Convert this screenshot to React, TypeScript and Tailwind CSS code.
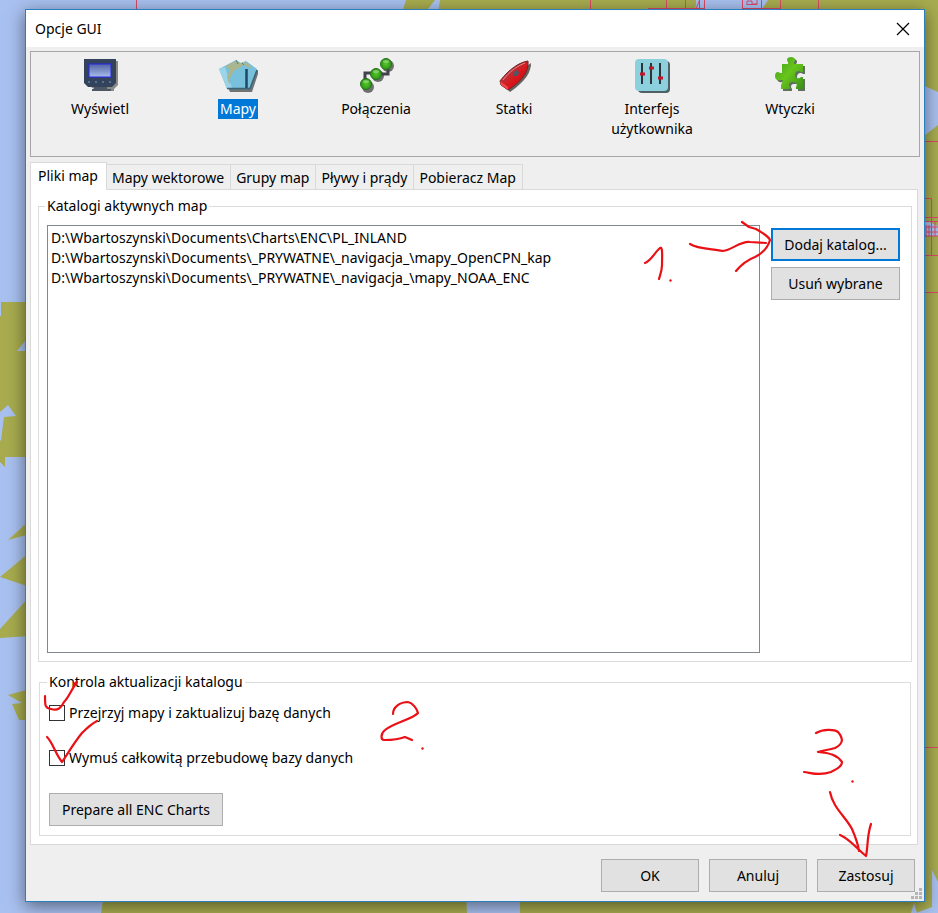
import { useState } from "react";
import type { ReactNode } from "react";

const TABS = ["Pliki map", "Mapy wektorowe", "Grupy map", "Pływy i prądy", "Pobieracz Map"];

const CHART_DIRS = [
    "D:\\Wbartoszynski\\Documents\\Charts\\ENC\\PL_INLAND",
    "D:\\Wbartoszynski\\Documents\\_PRYWATNE\\_navigacja_\\mapy_OpenCPN_kap",
    "D:\\Wbartoszynski\\Documents\\_PRYWATNE\\_navigacja_\\mapy_NOAA_ENC",
];

function DisplayIcon() {
    return (
        <svg width="40" height="40" viewBox="0 0 40 40">
            <defs>
                <linearGradient id="screen" x1="0" y1="0" x2="0" y2="1">
                    <stop offset="0" stopColor="#5262a4" />
                    <stop offset="1" stopColor="#a9bdea" />
                </linearGradient>
            </defs>
            <path d="M6 6H38V30L34 34V36H14V34L8 30Z" fill="#8d8984" />
            <path d="M4 4H36V28L32 32H8L4 28Z" fill="#33435c" />
            <path d="M14 32H27V34H31V36H12V34H14Z" fill="#4d5663" />
            <rect x="9" y="9" width="22" height="13" fill="url(#screen)" stroke="#2626f0" />
            <path d="M9 26V28M16 26V28M23 26V28M30 26V28" stroke="#79a3bd" />
        </svg>
    );
}

function MapsIcon() {
    return (
        <svg width="40" height="40" viewBox="0 0 40 40">
            <path d="M3 17L22 8L41 16L34 37H12Z" fill="#6f7476" />
            <path d="M1 14L18 5L23 8L28 6L39 14L32 34H9Z" fill="#79c0dc" />
            <path d="M1 14L7 12L14 33H9Z" fill="#9ad4e8" />
            <path d="M15 7L19 6L22 8L27 7L32 10L33 13L30 12L27 10L24 11L21 13L17 15L14 19L12 23L12 29L10 27L9 21L12 15L9 13L8 11Z" fill="#a9b68f" />
            <path d="M18 5L20 9M24 8L26 10" stroke="#4c7f90" />
            <path d="M9 33.500H32L39 15" fill="none" stroke="#3a6475" strokeWidth="1.500" />
            <path d="M28.500 14V33" stroke="#1c4a62" strokeWidth="2.500" />
        </svg>
    );
}

function ConnectionsIcon() {
    return (
        <svg width="40" height="40" viewBox="0 0 40 40">
            <defs>
                <radialGradient id="node">
                    <stop offset="0" stopColor="#52c828" />
                    <stop offset="1" stopColor="#2c9416" />
                </radialGradient>
            </defs>
            <g fill="#707070">
                <circle cx="12" cy="32" r="6" />
                <circle cx="22" cy="21" r="6" />
                <circle cx="32" cy="11" r="6" />
            </g>
            <path d="M9 26V18H20M20 19H32V11" fill="none" stroke="#41424c" strokeWidth="3" />
            <g fill="url(#node)" stroke="#286f20">
                <circle cx="10" cy="29" r="5.500" />
                <circle cx="20" cy="19" r="5.500" />
                <circle cx="30" cy="9" r="5.500" />
            </g>
            <g fill="#a8e58d" opacity="0.6">
                <ellipse cx="10" cy="26.500" rx="3" ry="1.500" />
                <ellipse cx="20" cy="16.500" rx="3" ry="1.500" />
                <ellipse cx="30" cy="6.500" rx="3" ry="1.500" />
            </g>
        </svg>
    );
}

function ShipsIcon() {
    return (
        <svg width="40" height="40" viewBox="0 0 40 40">
            <defs>
                <linearGradient id="hull" x1="0" y1="0" x2="1" y2="1">
                    <stop offset="0.200" stopColor="#a8454a" />
                    <stop offset="0.600" stopColor="#dd1218" />
                    <stop offset="1" stopColor="#8c2228" />
                </linearGradient>
            </defs>
            <path d="M37 8C37 17 32 26 16 37L8 29Z" fill="#66605e" />
            <path d="M34 6C26 7 15 14 6 26L7 30L14 35C28 26 35 17 34 6Z" fill="url(#hull)" stroke="#70252a" />
            <path d="M6 26L14 32L14 35L7 30Z" fill="#f04848" />
            <path d="M31 8C23 11 15 17 9 25" fill="none" stroke="#d98b8e" />
            <path d="M19 18L22 15L25 17L24 21L20 21Z" fill="#525662" />
        </svg>
    );
}

function InterfaceIcon() {
    return (
        <svg width="40" height="40" viewBox="0 0 40 40">
            <rect x="6" y="6" width="32" height="32" rx="4" fill="#4f6064" />
            <rect x="3" y="4" width="33" height="32" rx="4" fill="#8ccfdd" />
            <path d="M10 8V29M19 8V29M28 8V29" stroke="#2c3438" strokeWidth="2" />
            <path d="M8 19H13M17 13H22M26 23H31" stroke="#c0152b" strokeWidth="3" />
        </svg>
    );
}

function PuzzleShape({ fill }: { fill: string }) {
    return (
        <path
            d="M12 9H18V7C16 5 17 2 21 2C25 2 26 5 24 7V9H33V17H31C29 15 25 16 25 20C25 24 29 24 31 22H33V34H26V32C28 29 26 27 23 27C19 27 18 29 20 32V34H11V30L13 25H10C8 26 5 25 5 21C5 17 8 16 10 18H12Z"
            fill={fill}
        />
    );
}

function PluginsIcon() {
    return (
        <svg width="40" height="40" viewBox="0 0 40 40">
            <defs>
                <linearGradient id="puzzle" x1="0" y1="0" x2="1" y2="1">
                    <stop offset="0" stopColor="#3d9c1d" />
                    <stop offset="0.500" stopColor="#68c51b" />
                    <stop offset="1" stopColor="#389017" />
                </linearGradient>
            </defs>
            <g transform="translate(2 2)">
                <PuzzleShape fill="#60705a" />
            </g>
            <PuzzleShape fill="url(#puzzle)" />
        </svg>
    );
}

const SECTIONS = [
    { name: "Wyświetl", icon: <DisplayIcon /> },
    { name: "Mapy", icon: <MapsIcon /> },
    { name: "Połączenia", icon: <ConnectionsIcon /> },
    { name: "Statki", icon: <ShipsIcon /> },
    { name: "Interfejs użytkownika", icon: <InterfaceIcon /> },
    { name: "Wtyczki", icon: <PluginsIcon /> },
];

/* Sea chart visible behind the dialog */
function ChartBackground() {
    return (
        <svg className="absolute inset-0 w-full h-full" viewBox="0 0 938 913" preserveAspectRatio="none" aria-hidden="true">
            <rect width="938" height="913" fill="#a9c1f0" />
            <g fill="#a8ac4f">
                <path d="M406 0H435L428 9V20H400Z" />
                <path d="M440 0H938V913H101L104 895H420V20H437Z" />
                <path d="M0 302H30V457H5V467L0 462Z" />
                <path d="M30 520L8 540L30 534Z" />
                <path d="M30 552L0 577L30 587Z" />
                <path d="M30 596L0 629V638L30 636Z" />
                <path d="M30 689L8 695L22 703L12 704L19 720H30Z" />
            </g>
            <g fill="#a9c1f0">
                <path d="M466 895H520V913H467Z" />
                <path d="M0 302H1V316H0Z" />
                <path d="M30 335L17 351H30Z" />
                <path d="M0 412L8 405L16 416L4 417L1 441L0 440Z" />
                <path d="M696 0H768L762 9H696Z" />
                <path d="M698 0L695 9H705V0Z" />
                <path d="M920 84L938 92V125L920 139Z" />
                <path d="M920 218L938 226V236H920Z" />
                <path d="M938 882L932 870V907L916 913H938Z" />
                <path d="M911 913L914 903L917 913Z" />
            </g>
            <g fill="none" stroke="#dc4865">
                <path d="M136.500 0V9M590.500 0V9M666.500 0V9M685.500 0V9M699.500 0L696 9M699.500 0V9M704.500 0V9M742.500 0V9M761.500 0V9M780.500 0V9M818.500 0V9M648 8.500H705M742 8.500H781" />
                <path d="M747 5V1H752V4H757M747 4.500H757V0" />
                <path d="M925 141.500H938M925 198.500H931.500V255M925 217.500H938M925 221.500H938M925 255.500H938M925 292.500H938M925 747.500H938" />
                <path d="M926 225V237M929 225V237M926 227H938M926 232H938M935 222V236M925 236H938" />
            </g>
        </svg>
    );
}

/* Hand-written steps: 1. add directory, 2. tick both boxes, 3. apply */
function PenMarks() {
    return (
        <svg className="absolute inset-0 w-full h-full pointer-events-none" viewBox="0 0 938 913" preserveAspectRatio="none" aria-hidden="true">
            <g fill="none" stroke="#ea1015" strokeWidth="2.200" strokeLinecap="round" strokeLinejoin="round">
                <path d="M645 263C651 261 655 252 660 248C663 246 662 258 662 265C662 271 660 275 659 279" />
                <path d="M690 244C700 250 711 248 723 251C732 250 740 241 750 242L766 243" />
                <path d="M742 222L749 227L756 229C763 233 769 237 770 240C768 247 763 253 755 257C747 260 741 265 736 271" />
                <path d="M45 696C45 706 45 708 51 709C58 711 61 708 64 702C69 697 71 690 77 682M74 684L77 682" />
                <path d="M47 737C53 743 55 753 62 762C67 755 73 744 82 733C88 727 91 724 97 721" />
                <path d="M393 714C393 707 400 702 408 702C413 703 417 709 418 713C413 719 393 723 385 730C380 734 381 740 384 740C394 740 400 739 405 737L412 740" />
                <path d="M816 733C823 729 834 729 838 732C844 739 843 744 835 748C829 750 824 750 818 752C830 753 837 755 842 762C842 768 834 770 831 772C820 776 812 773 804 772" />
                <path d="M830 792C833 808 846 817 852 829C855 836 858 843 859 851M840 835C850 839 857 849 866 856C868 847 867 835 871 824" />
            </g>
            <g fill="#ea1015">
                <circle cx="670.500" cy="280.500" r="1.200" />
                <circle cx="422.500" cy="748.500" r="1.200" />
                <circle cx="852.500" cy="781.500" r="1.200" />
            </g>
        </svg>
    );
}

function DialogButton({ children, className = "border border-[#adadad]" }: { children: ReactNode; className?: string }) {
    return (
        <button type="button" className={`h-[33px] bg-[#e1e1e1] ${className}`}>
            {children}
        </button>
    );
}

function CheckRow({ id, label }: { id: string; label: string }) {
    const [checked, setChecked] = useState(false);

    return (
        <div className="flex items-center gap-1">
            <input
                id={id}
                type="checkbox"
                checked={checked}
                onChange={(e) => setChecked(e.target.checked)}
                className="appearance-none size-4 border border-[#333] bg-white checked:bg-[#0078d7]"
            />
            <label htmlFor={id}>{label}</label>
        </div>
    );
}

export default function App() {
    const [section, setSection] = useState("Mapy");
    const [tab, setTab] = useState("Pliki map");

    return (
        <div className="relative min-h-screen flex flex-col pt-[9px] pr-[13px] pb-[11px] pl-[25px] overflow-hidden font-['Noto_Sans',sans-serif] text-[14px] leading-5 text-black">
            <ChartBackground />

            <main className="relative flex-1 flex flex-col border border-[#2a7fc0] bg-[#efefef] shadow-[0_4px_16px_rgba(0,0,0,0.5)]">
                {/* Title bar */}
                <header className="h-[37px] pl-[9px] pr-[14px] flex items-center justify-between bg-white">
                    <h1>Opcje GUI</h1>
                    <button type="button" aria-label="Zamknij">
                        <svg width="14" height="14" viewBox="0 0 14 14" stroke="#000" strokeWidth="1.200">
                            <path d="M1 1L13 13M13 1L1 13" />
                        </svg>
                    </button>
                </header>

                {/* Section picker */}
                <nav className="mt-1 mx-1 h-[106px] pt-[3px] flex border border-[#a5a5aa]">
                    {SECTIONS.map((s) => (
                        <button key={s.name} type="button" onClick={() => setSection(s.name)} className="w-[138px] flex flex-col items-center gap-1">
                            {s.icon}
                            <span className={s.name === section ? "px-[2px] max-w-24 bg-[#0078d7] text-white" : "px-[2px] max-w-24"}>{s.name}</span>
                        </button>
                    ))}
                </nav>

                {/* Tabs */}
                <div role="tablist" className="mt-[5px] ml-1 h-[27px] flex items-end">
                    {TABS.map((t) => (
                        <button
                            key={t}
                            type="button"
                            role="tab"
                            aria-selected={t === tab}
                            onClick={() => setTab(t)}
                            className={
                                t === tab
                                    ? "relative z-10 h-7 -mb-px pl-[7px] pr-2 pb-[2px] bg-white border border-b-0 border-[#d9d9d9]"
                                    : "h-[25px] pt-px pl-[5px] pr-[6px] border border-l-0 border-b-0 border-[#d9d9d9]"
                            }
                        >
                            {t}
                        </button>
                    ))}
                </div>

                <section className="ml-1 mr-[6px] flex-1 flex flex-col pt-[6px] pl-[7px] pr-[5px] pb-2 bg-white border border-[#d9d9d9]">
                    <fieldset className="flex-1 min-w-0 border border-[#dcdcdc] pt-[9px] pl-2 pr-[11px] pb-[7px]">
                        <legend className="px-[2px] -ml-[2px]">Katalogi aktywnych map</legend>
                        <div className="flex items-start gap-[11px]">
                            <ul className="flex-1 min-h-[428px] border border-[#828790] pt-[2px] px-[3px]">
                                {CHART_DIRS.map((dir) => (
                                    <li key={dir}>{dir}</li>
                                ))}
                            </ul>
                            <div className="w-[129px] pt-[3px] flex flex-col gap-[6px]">
                                <DialogButton className="border-2 border-[#0078d7]">Dodaj katalog...</DialogButton>
                                <DialogButton>Usuń wybrane</DialogButton>
                            </div>
                        </div>
                    </fieldset>

                    <fieldset className="mt-[10px] mr-px ml-px min-w-0 border border-[#dcdcdc] pt-[11px] px-[9px] pb-[9px]">
                        <legend className="px-[2px] -ml-[2px]">Kontrola aktualizacji katalogu</legend>
                        <div className="flex flex-col gap-[25px]">
                            <CheckRow id="scan" label="Przejrzyj mapy i zaktualizuj bazę danych" />
                            <CheckRow id="rebuild" label="Wymuś całkowitą przebudowę bazy danych" />
                            <DialogButton className="self-start px-3 border border-[#adadad]">Prepare all ENC Charts</DialogButton>
                        </div>
                    </fieldset>
                </section>

                <footer className="pt-[14px] pr-[9px] pb-[9px] flex justify-end gap-[10px]">
                    <DialogButton className="w-[98px] border border-[#adadad]">OK</DialogButton>
                    <DialogButton className="w-[98px] border border-[#adadad]">Anuluj</DialogButton>
                    <DialogButton className="w-[98px] border border-[#adadad]">Zastosuj</DialogButton>
                </footer>

                {/* Resize grip */}
                <svg className="absolute right-[2px] bottom-[2px]" width="12" height="12" viewBox="0 0 12 12" fill="#b5b5b5" aria-hidden="true">
                    <path d="M9 1h3v3h-3zM5 5h3v3h-3zM9 5h3v3h-3zM1 9h3v3h-3zM5 9h3v3h-3zM9 9h3v3h-3z" />
                </svg>
            </main>

            <PenMarks />
        </div>
    );
}
